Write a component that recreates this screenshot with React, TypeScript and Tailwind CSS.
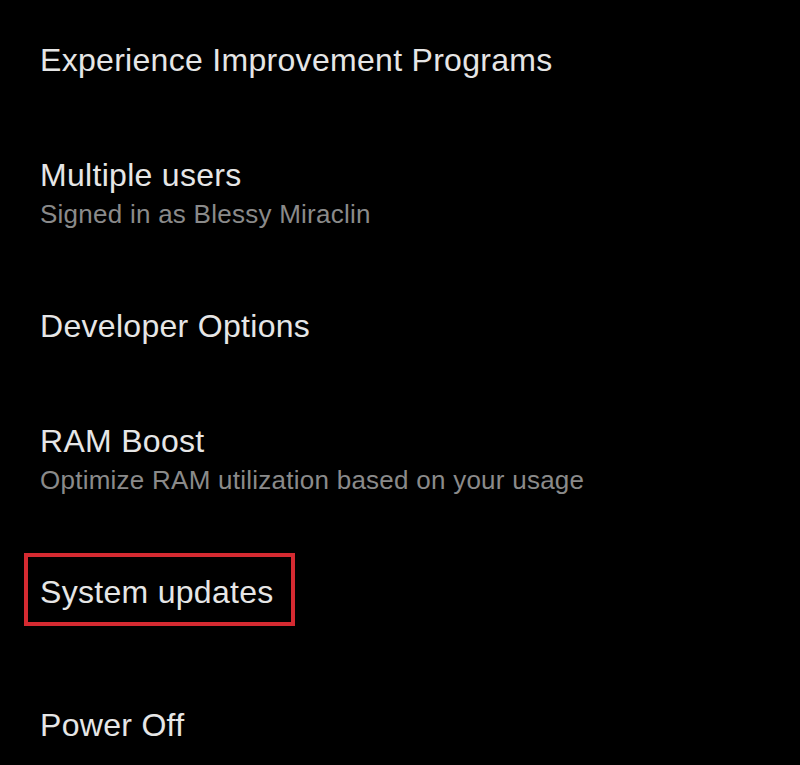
import React from 'react';

interface SettingRow {
  title: string;
  subtitle?: string;
  highlighted?: boolean;
}

const rows: SettingRow[] = [
  { title: 'Experience Improvement Programs' },
  { title: 'Multiple users', subtitle: 'Signed in as Blessy Miraclin' },
  { title: 'Developer Options' },
  { title: 'RAM Boost', subtitle: 'Optimize RAM utilization based on your usage' },
  { title: 'System updates', highlighted: true },
  { title: 'Power Off' },
];

const Row: React.FC<{ row: SettingRow }> = ({ row }) => (
  <div className="flex flex-col">
    <div className="text-[32px] leading-[40px] tracking-[0.3px] text-[#e6e6e6]">{row.title}</div>
    {row.subtitle && (
      <div className="mt-[3px] text-[26px] leading-[32px] tracking-[0.25px] text-[#8a8a8a]">{row.subtitle}</div>
    )}
  </div>
);

const App: React.FC = () => {
  return (
    <div
      className="w-[800px] h-[765px] overflow-hidden bg-black pl-[40px] pt-[40px]"
      style={{ fontFamily: '"Liberation Sans", Arial, sans-serif' }}
    >
      {/* Experience */}
      <Row row={rows[0]} />
      <div className="mt-[75px]">
        <Row row={rows[1]} />
      </div>
      <div className="mt-[76px]">
        <Row row={rows[2]} />
      </div>
      <div className="mt-[75px]">
        <Row row={rows[3]} />
      </div>

      {/* highlighted row */}
      <div className="mt-[57px] -ml-[16px] w-[271px] h-[73px] border-[4px] border-[#d52a31] pl-[12px] pt-[15px]">
        <Row row={rows[4]} />
      </div>

      <div className="mt-[79px]">
        <Row row={rows[5]} />
      </div>
    </div>
  );
};

export default App;
